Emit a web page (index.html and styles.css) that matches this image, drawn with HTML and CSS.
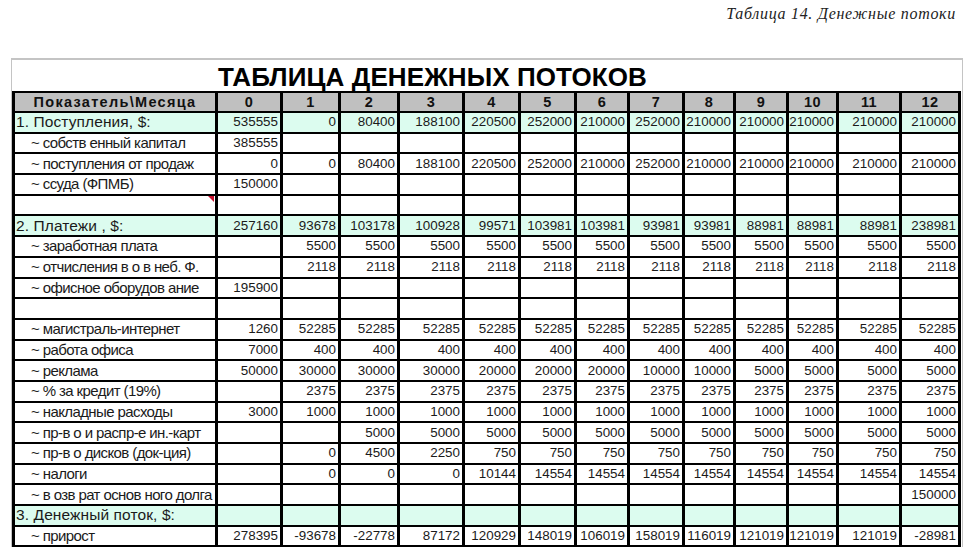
FILE: index.html
```html
<!DOCTYPE html>
<html lang="ru">
<head>
<meta charset="utf-8">
<title>Таблица денежных потоков</title>
<link rel="stylesheet" href="styles.css">
</head>
<body>
<div class="caption">Таблица 14. Денежные потоки</div>
<div class="sheet">
  <div class="title">ТАБЛИЦА ДЕНЕЖНЫХ ПОТОКОВ</div>
  <table class="grid">
    <colgroup>
      <col class="c-label"><col class="w65"><col class="w58"><col class="w59"><col class="w65"><col class="w56"><col class="w56"><col class="w53"><col class="w55"><col class="w51"><col class="w53"><col class="w50"><col class="w63"><col class="w59">
    </colgroup>
    <thead>
      <tr class="head"><th>Показатель\Месяца</th><th>0</th><th>1</th><th>2</th><th>3</th><th>4</th><th>5</th><th>6</th><th>7</th><th>8</th><th>9</th><th>10</th><th>11</th><th>12</th></tr>
    </thead>
    <tbody>
      <tr class="sec"><td class="lab">1. Поступления, $:</td><td>535555</td><td>0</td><td>80400</td><td>188100</td><td>220500</td><td>252000</td><td>210000</td><td>252000</td><td>210000</td><td>210000</td><td>210000</td><td>210000</td><td>210000</td></tr>
      <tr><td class="sub">~ собств енный капитал</td><td>385555</td><td></td><td></td><td></td><td></td><td></td><td></td><td></td><td></td><td></td><td></td><td></td><td></td></tr>
      <tr><td class="sub">~ поступления от продаж</td><td>0</td><td>0</td><td>80400</td><td>188100</td><td>220500</td><td>252000</td><td>210000</td><td>252000</td><td>210000</td><td>210000</td><td>210000</td><td>210000</td><td>210000</td></tr>
      <tr><td class="sub">~ ссуда (ФПМБ)</td><td>150000</td><td></td><td></td><td></td><td></td><td></td><td></td><td></td><td></td><td></td><td></td><td></td><td></td></tr>
      <tr><td class="sub note"><span class="mark"></span></td><td></td><td></td><td></td><td></td><td></td><td></td><td></td><td></td><td></td><td></td><td></td><td></td><td></td></tr>
      <tr class="sec"><td class="lab">2. Платежи , $:</td><td>257160</td><td>93678</td><td>103178</td><td>100928</td><td>99571</td><td>103981</td><td>103981</td><td>93981</td><td>93981</td><td>88981</td><td>88981</td><td>88981</td><td>238981</td></tr>
      <tr><td class="sub">~ заработная плата</td><td></td><td>5500</td><td>5500</td><td>5500</td><td>5500</td><td>5500</td><td>5500</td><td>5500</td><td>5500</td><td>5500</td><td>5500</td><td>5500</td><td>5500</td></tr>
      <tr><td class="sub">~ отчисления в о в неб. Ф.</td><td></td><td>2118</td><td>2118</td><td>2118</td><td>2118</td><td>2118</td><td>2118</td><td>2118</td><td>2118</td><td>2118</td><td>2118</td><td>2118</td><td>2118</td></tr>
      <tr><td class="sub">~ офисное оборудов ание</td><td>195900</td><td></td><td></td><td></td><td></td><td></td><td></td><td></td><td></td><td></td><td></td><td></td><td></td></tr>
      <tr><td class="sub"></td><td></td><td></td><td></td><td></td><td></td><td></td><td></td><td></td><td></td><td></td><td></td><td></td><td></td></tr>
      <tr><td class="sub">~ магистраль-интернет</td><td>1260</td><td>52285</td><td>52285</td><td>52285</td><td>52285</td><td>52285</td><td>52285</td><td>52285</td><td>52285</td><td>52285</td><td>52285</td><td>52285</td><td>52285</td></tr>
      <tr><td class="sub">~ работа офиса</td><td>7000</td><td>400</td><td>400</td><td>400</td><td>400</td><td>400</td><td>400</td><td>400</td><td>400</td><td>400</td><td>400</td><td>400</td><td>400</td></tr>
      <tr><td class="sub">~ реклама</td><td>50000</td><td>30000</td><td>30000</td><td>30000</td><td>20000</td><td>20000</td><td>20000</td><td>10000</td><td>10000</td><td>5000</td><td>5000</td><td>5000</td><td>5000</td></tr>
      <tr><td class="sub">~ % за кредит (19%)</td><td></td><td>2375</td><td>2375</td><td>2375</td><td>2375</td><td>2375</td><td>2375</td><td>2375</td><td>2375</td><td>2375</td><td>2375</td><td>2375</td><td>2375</td></tr>
      <tr><td class="sub">~ накладные расходы</td><td>3000</td><td>1000</td><td>1000</td><td>1000</td><td>1000</td><td>1000</td><td>1000</td><td>1000</td><td>1000</td><td>1000</td><td>1000</td><td>1000</td><td>1000</td></tr>
      <tr><td class="sub">~ пр-в о и распр-е ин.-карт</td><td></td><td></td><td>5000</td><td>5000</td><td>5000</td><td>5000</td><td>5000</td><td>5000</td><td>5000</td><td>5000</td><td>5000</td><td>5000</td><td>5000</td></tr>
      <tr><td class="sub">~ пр-в о дисков (док-ция)</td><td></td><td>0</td><td>4500</td><td>2250</td><td>750</td><td>750</td><td>750</td><td>750</td><td>750</td><td>750</td><td>750</td><td>750</td><td>750</td></tr>
      <tr><td class="sub">~ налоги</td><td></td><td>0</td><td>0</td><td>0</td><td>10144</td><td>14554</td><td>14554</td><td>14554</td><td>14554</td><td>14554</td><td>14554</td><td>14554</td><td>14554</td></tr>
      <tr><td class="sub">~ в озв рат основ ного долга</td><td></td><td></td><td></td><td></td><td></td><td></td><td></td><td></td><td></td><td></td><td></td><td></td><td>150000</td></tr>
      <tr class="sec"><td class="lab">3. Денежный поток, $:</td><td></td><td></td><td></td><td></td><td></td><td></td><td></td><td></td><td></td><td></td><td></td><td></td><td></td></tr>
      <tr><td class="sub">~ прирост</td><td>278395</td><td>-93678</td><td>-22778</td><td>87172</td><td>120929</td><td>148019</td><td>106019</td><td>158019</td><td>116019</td><td>121019</td><td>121019</td><td>121019</td><td>-28981</td></tr>
    </tbody>
  </table>
</div>
</body>
</html>
```

FILE: styles.css
```css
html, body {
  margin: 0;
  padding: 0;
  background: #ffffff;
}

body {
  width: 972px;
  height: 548px;
  overflow: hidden;
  font-family: "Liberation Sans", Arial, sans-serif;
  color: #1a1a1a;
}

.caption {
  height: 30px;
  padding-top: 5px;
  padding-right: 16px;
  box-sizing: border-box;
  text-align: right;
  font-family: "Liberation Serif", "Times New Roman", serif;
  font-style: italic;
  font-size: 16px;
  letter-spacing: 0.7px;
  color: #222;
}

.sheet {
  margin-top: 28px;
  margin-left: 11px;
  width: 952px;
  border: 1px solid #c4c4c4;
  border-top-width: 2px;
  border-bottom: none;
  box-sizing: border-box;
}

.title {
  height: 31px;
  padding-left: 206px;
  font-size: 26px;
  font-weight: bold;
  line-height: 34px;
  color: #000;
  letter-spacing: 0.1px;
}

.grid {
  border-collapse: collapse;
  table-layout: fixed;
  width: 947px;
}

.c-label { width: 203px; }
.w65 { width: 65px; }
.w58 { width: 58px; }
.w59 { width: 59px; }
.w56 { width: 56px; }
.w53 { width: 53px; }
.w55 { width: 55px; }
.w51 { width: 51px; }
.w50 { width: 50px; }
.w63 { width: 63px; }

.grid th,
.grid td {
  border-top: 2px solid #000;
  border-bottom: 2px solid #000;
  border-left: 3px solid #000;
  border-right: 3px solid #000;
  padding: 0 2px 0 0;
  height: 18.7px;
  line-height: 18px;
  font-size: 13.4px;
  text-align: right;
  white-space: nowrap;
  overflow: hidden;
}

.head th {
  background: #c0c0c0;
  text-align: center;
  font-weight: bold;
  font-size: 14.5px;
  letter-spacing: 0.4px;
  padding: 0;
  height: 18px;
  color: #111;
}

.head th:first-child {
  letter-spacing: 1.3px;
}

.sec td {
  background: #dcfcef;
}

.grid td.lab {
  text-align: left;
  font-size: 15.5px;
  padding-left: 1px;
  letter-spacing: 0.1px;
}

.grid td.sub {
  text-align: left;
  padding-left: 16px;
  font-size: 15px;
  letter-spacing: -0.6px;
}

.note {
  position: relative;
}

.mark {
  position: absolute;
  right: 1px;
  top: 0;
  width: 0;
  height: 0;
  border-top: 6px solid #c8102e;
  border-left: 6px solid transparent;
}
```
